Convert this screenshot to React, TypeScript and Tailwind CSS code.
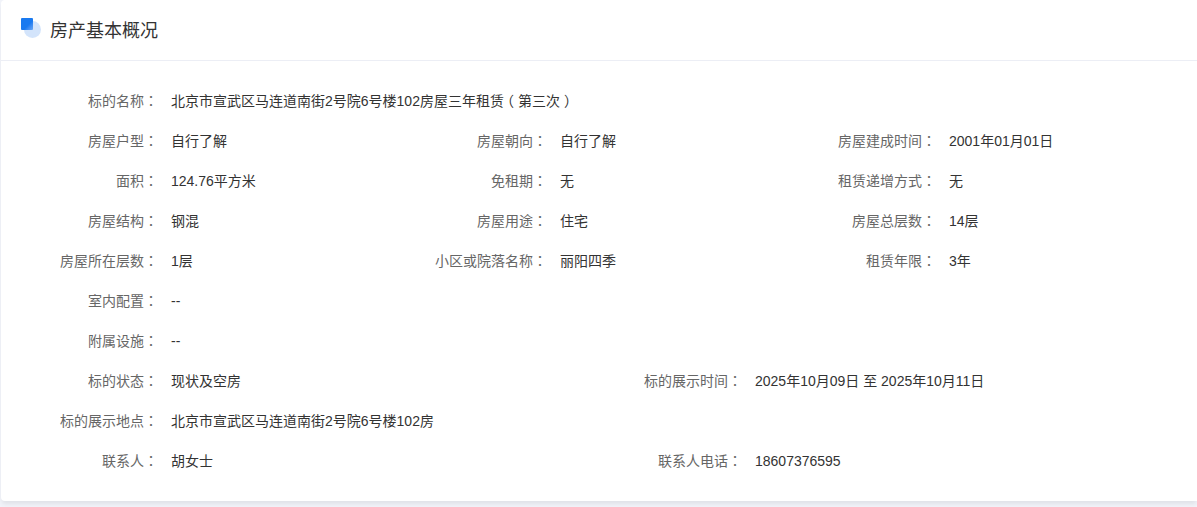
// App.tsx
const rows: [string, string][][] = [
  [["标的名称", "北京市宣武区马连道南街2号院6号楼102房屋三年租赁（第三次）"]],
  [["房屋户型", "自行了解"], ["房屋朝向", "自行了解"], ["房屋建成时间", "2001年01月01日"]],
  [["面积", "124.76平方米"], ["免租期", "无"], ["租赁递增方式", "无"]],
  [["房屋结构", "钢混"], ["房屋用途", "住宅"], ["房屋总层数", "14层"]],
  [["房屋所在层数", "1层"], ["小区或院落名称", "丽阳四季"], ["租赁年限", "3年"]],
  [["室内配置", "--"]],
  [["附属设施", "--"]],
];

const halfRows: [string, string][][] = [
  [["标的状态", "现状及空房"], ["标的展示时间", "2025年10月09日 至 2025年10月11日"]],
  [["标的展示地点", "北京市宣武区马连道南街2号院6号楼102房"]],
  [["联系人", "胡女士"], ["联系人电话", "18607376595"]],
];

// full-width brackets sit centred in the reference font, so nudge them
function Value({ text }: { text: string }) {
  const parts = text.split(/([（）])/);
  return (
    <span className="ml-[13px] whitespace-nowrap text-[#333]">
      {parts.map((part, i) => {
        if (part === "（") return <span key={i} className="inline-block -translate-x-1">{part}</span>;
        if (part === "）") return <span key={i} className="inline-block translate-x-1">{part}</span>;
        return part;
      })}
    </span>
  );
}

function Field({ label, value, wide }: { label: string; value: string; wide?: boolean }) {
  return (
    <div className={wide ? "flex h-10 items-center col-span-3" : "flex h-10 items-center"}>
      <span className="w-[143px] shrink-0 text-right text-[#666]">
        {label}
        {/* the TC face centres the colon */}
        <span className="font-['Noto_Sans_CJK_TC',sans-serif] leading-none">：</span>
      </span>
      <Value text={value} />
    </div>
  );
}

export default function App() {
  return (
    <div className="h-[507px] overflow-hidden bg-[#f1f3f9] pl-px font-['Liberation_Sans','Noto_Sans_CJK_SC',sans-serif] text-sm">
      <div className="h-[501px] rounded-l bg-white shadow-[0_4px_4px_-1px_rgba(0,0,0,0.07)]">
        {/* Header */}
        <div className="flex h-[61px] items-center border-b border-[#eceef5] pl-5">
          <div className="relative mb-1 h-[20px] w-[21px]">
            <div className="absolute top-[3px] left-[3px] h-[17px] w-[17px] rounded-full bg-[#d3e4fb]" />
            <div className="absolute top-0 left-0 h-3 w-3 rounded-[1px] bg-gradient-to-br from-[#1a7af0] from-60% to-[#6aa8f5]" />
          </div>
          <h2 className="ml-2 pt-0.5 text-lg text-[#333]">房产基本概况</h2>
        </div>

        {/* Fields */}
        <div className="px-[14px] py-5">
          <div className="grid grid-cols-[389px_389px_389px]">
            {rows.map((row) =>
              row.map(([label, value], i) => (
                <Field key={label} label={label} value={value} wide={row.length === 1 && i === 0} />
              )),
            )}
          </div>
          <div className="grid grid-cols-[584px_584px]">
            {halfRows.map((row) =>
              row.map(([label, value]) => (
                <div key={label} className={row.length === 1 ? "col-span-2" : ""}>
                  <Field label={label} value={value} />
                </div>
              )),
            )}
          </div>
        </div>
      </div>
    </div>
  );
}
